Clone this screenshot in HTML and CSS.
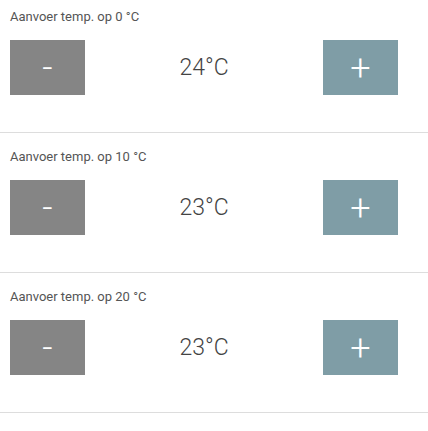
FILE: index.html
```html
<!DOCTYPE html>
<html lang="nl">
<head>
<meta charset="utf-8">
<title>Aanvoer temperatuur</title>
<link rel="stylesheet" href="styles.css">
</head>
<body>
<div class="list">
  <div class="item">
    <div class="label">Aanvoer temp. op 0 °C</div>
    <div class="controls">
      <button class="btn btn-minus" type="button">-</button>
      <div class="value">24°C</div>
      <button class="btn btn-plus" type="button">+</button>
    </div>
  </div>
  <div class="item">
    <div class="label">Aanvoer temp. op 10 °C</div>
    <div class="controls">
      <button class="btn btn-minus" type="button">-</button>
      <div class="value">23°C</div>
      <button class="btn btn-plus" type="button">+</button>
    </div>
  </div>
  <div class="item">
    <div class="label">Aanvoer temp. op 20 °C</div>
    <div class="controls">
      <button class="btn btn-minus" type="button">-</button>
      <div class="value">23°C</div>
      <button class="btn btn-plus" type="button">+</button>
    </div>
  </div>
</div>
</body>
</html>
```

FILE: styles.css
```css
html, body {
  margin: 0;
  padding: 0;
  background: #ffffff;
}
body {
  font-family: Roboto, "Liberation Sans", sans-serif;
  color: #333333;
}
.list {
  display: flex;
  flex-direction: column;
  gap: 7px;
}
.item {
  padding: 9px 30px 37px 10px;
  border-bottom: 1px solid #dddddd;
}
.label {
  font-size: 13px;
  line-height: 16px;
  color: #555555;
}
.controls {
  margin-top: 15px;
  display: flex;
  align-items: center;
  justify-content: space-between;
}
.btn {
  width: 75px;
  height: 55px;
  border: none;
  margin: 0;
  padding: 0;
  display: flex;
  align-items: center;
  justify-content: center;
  color: #ffffff;
  font-family: Roboto, "Liberation Sans", sans-serif;
  font-weight: 300;
  font-size: 36px;
  line-height: 1;
}
.btn-minus {
  background: #858585;
}
.btn-plus {
  background: #7f9da6;
}
.value {
  font-size: 23px;
  font-weight: 300;
  color: #444444;
  line-height: 1;
}
```
